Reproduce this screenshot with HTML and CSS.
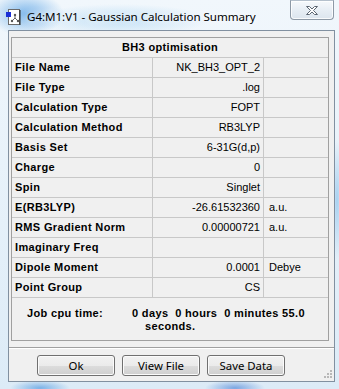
FILE: index.html
```html
<!DOCTYPE html>
<html>
<head>
<meta charset="utf-8">
<link rel="stylesheet" href="styles.css">
</head>
<body>
<div class="window">
  <div class="titlebar">
    <svg class="app-icon" width="16" height="16" viewBox="0 0 16 16">
      <rect x="2.5" y="0.5" width="11" height="15" fill="#fff" stroke="#6b6b6b"/>
      <line x1="14" y1="1" x2="14" y2="16" stroke="#222"/>
      <rect x="0" y="3" width="5" height="5" fill="#1a2fd6"/>
      <line x1="9" y1="6" x2="9" y2="9" stroke="#666"/>
      <line x1="9" y1="9" x2="6" y2="12" stroke="#666"/>
      <line x1="9" y1="9" x2="12" y2="12" stroke="#666"/>
      <circle cx="9" cy="6" r="1.2" fill="#555"/>
      <circle cx="6" cy="12" r="1.2" fill="#555"/>
      <circle cx="12" cy="12" r="1.2" fill="#555"/>
    </svg>
    <span class="title">G4:M1:V1 - Gaussian Calculation Summary</span>
    <div class="close">
      <svg width="14" height="11" viewBox="0 0 14 11">
        <path d="M1.5,1.5 H4.5 L7,4 L9.5,1.5 H12.5 L8.5,5.5 L12.5,9.5 H9.5 L7,7 L4.5,9.5 H1.5 L5.5,5.5 Z" fill="#fff" stroke="#5d6773" stroke-width="1" stroke-linejoin="round"/>
      </svg>
    </div>
  </div>
  <div class="client">
    <div class="summary">
      <div class="hdr">BH3 optimisation</div>
      <div class="lbl">File Name</div><div class="val">NK_BH3_OPT_2</div><div class="unit"></div>
      <div class="lbl">File Type</div><div class="val">.log</div><div class="unit"></div>
      <div class="lbl">Calculation Type</div><div class="val">FOPT</div><div class="unit"></div>
      <div class="lbl">Calculation Method</div><div class="val">RB3LYP</div><div class="unit"></div>
      <div class="lbl">Basis Set</div><div class="val">6-31G(d,p)</div><div class="unit"></div>
      <div class="lbl">Charge</div><div class="val">0</div><div class="unit"></div>
      <div class="lbl">Spin</div><div class="val">Singlet</div><div class="unit"></div>
      <div class="lbl">E(RB3LYP)</div><div class="val">-26.61532360</div><div class="unit">a.u.</div>
      <div class="lbl">RMS Gradient Norm</div><div class="val">0.00000721</div><div class="unit">a.u.</div>
      <div class="lbl">Imaginary Freq</div><div class="val"></div><div class="unit"></div>
      <div class="lbl">Dipole Moment</div><div class="val">0.0001</div><div class="unit">Debye</div>
      <div class="lbl">Point Group</div><div class="val">CS</div><div class="unit"></div>
      <div class="job">
        <span class="job-lbl">Job cpu time:</span>
        <span class="job-val"><span class="line">0 days  0 hours  0 minutes 55.0</span><span class="line indent">seconds.</span></span>
      </div>
    </div>
    <div class="sep"></div>
    <div class="buttons">
      <button class="btn">Ok</button>
      <button class="btn">View File</button>
      <button class="btn">Save Data</button>
    </div>
    <svg class="grip" width="10" height="10" viewBox="0 0 10 10">
      <g fill="#b8b8b8">
        <rect x="7" y="1" width="2" height="2"/>
        <rect x="4" y="4" width="2" height="2"/><rect x="7" y="4" width="2" height="2"/>
        <rect x="1" y="7" width="2" height="2"/><rect x="4" y="7" width="2" height="2"/><rect x="7" y="7" width="2" height="2"/>
      </g>
    </svg>
  </div>
</div>
</body>
</html>
```
FILE: styles.css
```css
html, body {
  margin: 0;
  padding: 0;
}
body {
  width: 339px;
  height: 389px;
  overflow: hidden;
  background:
    radial-gradient(ellipse 38px 22px at 26px 14px, rgba(30, 130, 220, 0.55), rgba(30, 130, 220, 0) 100%),
    radial-gradient(ellipse 90px 16px at 120px 20px, rgba(110, 185, 235, 0.35), rgba(110, 185, 235, 0) 100%),
    radial-gradient(ellipse 30px 8px at 40px 388px, rgba(60, 140, 220, 0.6), rgba(60, 140, 220, 0) 100%),
    radial-gradient(ellipse 30px 8px at 235px 388px, rgba(60, 120, 210, 0.6), rgba(60, 120, 210, 0) 100%),
    radial-gradient(ellipse 6px 60px at 337px 200px, rgba(90, 170, 230, 0.45), rgba(90, 170, 230, 0) 100%),
    linear-gradient(#f1f7fc, #dcebf7);
  font-family: "Liberation Sans", Arial, sans-serif;
  color: #000;
}
.window {
  width: 339px;
  height: 389px;
  display: flex;
  flex-direction: column;
}
.titlebar {
  height: 30px;
  display: flex;
  align-items: flex-start;
  flex: none;
}
.app-icon {
  margin: 9px 0 0 6px;
  flex: none;
}
.title {
  margin: 9px 0 0 5px;
  font-family: "Noto Sans", "Liberation Sans", sans-serif;
  font-size: 11.6px;
  line-height: 16px;
  letter-spacing: -0.05px;
  color: #000;
  text-shadow: 0 0 6px #fff, 0 0 10px #fff;
  white-space: nowrap;
}
.close {
  margin: 0 5px 0 auto;
  width: 44px;
  height: 20px;
  box-sizing: border-box;
  border: 1px solid #8d99a6;
  border-top-color: #b4c0cc;
  border-radius: 0 0 4px 4px;
  background: linear-gradient(#f6f9fc, #e6edf4 55%, #dce5ee);
  box-shadow: inset 0 0 0 1px rgba(255, 255, 255, 0.8);
  display: flex;
  align-items: center;
  justify-content: center;
  flex: none;
}
.client {
  position: relative;
  margin: 0 4px 0 8px;
  height: 352px;
  box-sizing: border-box;
  border: 1px solid #8190a0;
  background: #f0f0f0;
  flex: none;
}
.summary {
  margin: 6px 5px 0 2px;
  border: 1px solid #a0a0a0;
  background: #c8c8c8;
  display: grid;
  grid-template-columns: 140px 110px 64px;
  grid-template-rows: repeat(13, 19px) 42px;
  gap: 1px;
}
.summary > div {
  background: #f0f0f0;
  font-size: 11px;
  line-height: 19px;
  white-space: nowrap;
  overflow: hidden;
}
.hdr {
  grid-column: 1 / 4;
  text-align: center;
  font-weight: bold;
  letter-spacing: 0.35px;
}
.lbl {
  padding-left: 3px;
  font-weight: bold;
  letter-spacing: 0.35px;
}
.val {
  text-align: right;
  padding-right: 3px;
}
.unit {
  padding-left: 5px;
}
.summary > .job {
  grid-column: 1 / 4;
  display: flex;
  align-items: flex-start;
  padding-top: 9px;
  box-sizing: border-box;
  font-weight: bold;
  letter-spacing: 0.35px;
  line-height: 13px;
}
.job-lbl {
  width: 105px;
  padding-left: 15px;
  flex: none;
}
.job-val {
  display: flex;
  flex-direction: column;
}
.line {
  white-space: pre;
}
.indent {
  padding-left: 13px;
}
.sep {
  margin-top: 6px;
  height: 0;
  border-top: 1px solid #a0a0a0;
  border-bottom: 1px solid #ffffff;
}
.buttons {
  margin-top: 6px;
  padding-left: 28px;
  display: flex;
  gap: 7px;
}
.btn {
  width: 78px;
  height: 21px;
  box-sizing: border-box;
  border: 1px solid #707070;
  border-radius: 3px;
  background: linear-gradient(#f2f2f2 0%, #ebebeb 50%, #dddddd 51%, #cfcfcf 100%);
  box-shadow: inset 0 0 0 1px #fbfbfb;
  font-family: "Noto Sans", "Liberation Sans", sans-serif;
  font-size: 11.4px;
  color: #000;
  padding: 0;
  line-height: 17px;
}
.grip {
  position: absolute;
  right: 1px;
  bottom: 2px;
}
```
